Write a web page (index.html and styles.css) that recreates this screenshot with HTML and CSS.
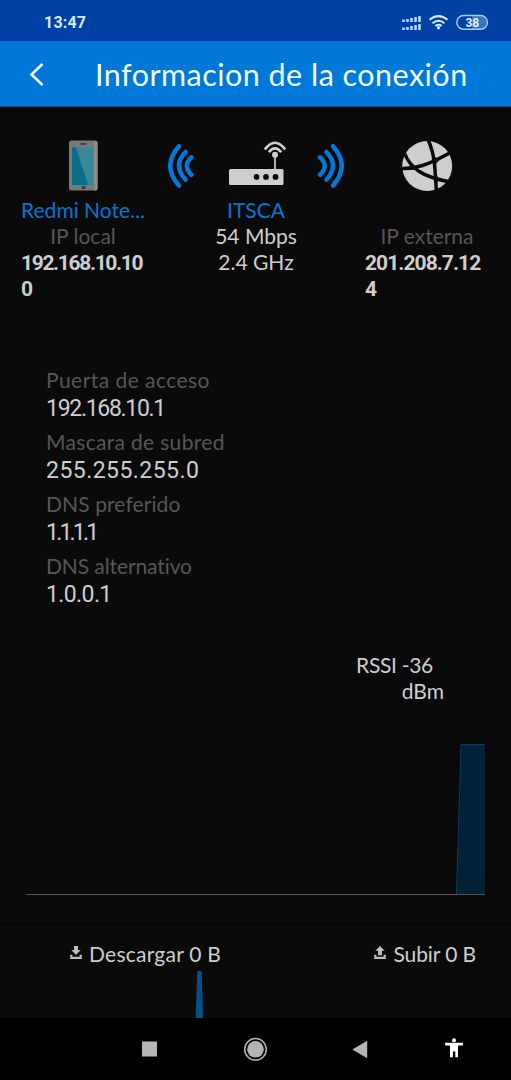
FILE: index.html
```html
<!DOCTYPE html>
<html lang="es">
<head>
<meta charset="utf-8">
<meta name="viewport" content="width=device-width, initial-scale=1">
<title>Informacion de la conexión</title>
<link rel="stylesheet" href="styles.css">
</head>
<body>
<div class="screen">
  <div class="status">
    <span class="clock">13:47</span>
    <svg class="status-icons" width="88" height="18" viewBox="401 14 88 18">
      <g stroke="#bdd9ff" stroke-width="2.600">
        <path d="M403.500 19.500v2.500M407.500 18.900v3.100M411.500 18v4M415.500 17v5M419.500 16v6M403.500 27.500v2.500M407.500 26.900v3.100M411.500 26v4M415.500 25v5M419.500 24v6"/>
      </g>
      <g fill="none" stroke="#d5ebff" stroke-width="2">
        <path d="M429.500 19.700Q438.500 12.500 447.500 19.700M432.500 23.200Q438.500 18.300 444.500 23.200M435.300 26Q438.500 23.600 441.700 26"/>
      </g>
      <circle cx="438.500" cy="27.800" r="1.700" fill="#d5ebff"/>
      <path d="M472 16h8a6.500 6.500 0 0 1 0 13h-8z" fill="#3a72bf"/>
      <rect x="456.800" y="15.600" width="30.600" height="13.600" rx="6.800" fill="none" stroke="#a9cdf8" stroke-width="1.500"/>
      <text x="472.300" y="27" text-anchor="middle" class="battery-text">38</text>
    </svg>
  </div>
  <header class="header">
    <svg class="back" width="18" height="26" viewBox="28 61 18 26"><path d="M42.500 64L31.500 74.500L42.500 85" fill="none" stroke="#effcff" stroke-width="2.600"/></svg>
    <h1 class="title">Informacion de la conexión</h1>
  </header>

  <main class="content">
    <section class="topology">
      <div class="node">
        <svg class="node-icon" width="54" height="56" viewBox="56 138 54 56">
          <rect x="69" y="140.500" width="28.500" height="50" rx="2.500" fill="#777a7b"/>
          <path d="M94 141h1.500a2 2 0 0 1 2 2v46a2 2 0 0 1-2 1.500H94z" fill="#8d8d8d"/>
          <rect x="72" y="147.500" width="22" height="37.500" fill="#39879a"/>
          <path d="M72 147.500h4L88 185H72z" fill="#096f87"/>
          <path d="M80.500 144h6" stroke="#333" stroke-width="1.500"/>
          <rect x="81.500" y="186" width="4" height="3" rx="1" fill="#3d3d3d"/>
        </svg>
        <div class="line link redmi">Redmi Note...</div>
        <div class="line muted local">IP local</div>
        <div class="address local-address">192.168.10.10<br>0</div>
      </div>
      <svg class="waves" width="58" height="56" viewBox="152 138 58 56">
        <g fill="none" stroke="#0079d6" stroke-width="4.500" stroke-linecap="round">
          <path d="M179 146.200Q161.500 165.500 179 185.500M185.500 152Q172.500 165.500 185.500 179.500M191.500 157.300Q182 165.500 191.500 174.800"/>
        </g>
      </svg>
      <div class="node">
        <svg class="node-icon" width="70" height="56" viewBox="221 138 70 56">
          <g fill="none" stroke="#cecece">
            <path d="M264.800 149.500Q275 136 285.200 149.500" stroke-width="2.700"/>
            <path d="M268.800 152.200Q275 144.500 281.200 152.200" stroke-width="2.700"/>
            <path d="M275 155v15" stroke-width="1.700"/>
          </g>
          <circle cx="275" cy="154.700" r="3" fill="#cecece"/>
          <rect x="229" y="169" width="54.500" height="16" rx="1.500" fill="#cecece"/>
          <g fill="#0a0a0a"><circle cx="256.500" cy="176.900" r="2.900"/><circle cx="266" cy="176.900" r="2.900"/><circle cx="275.500" cy="176.900" r="2.900"/></g>
        </svg>
        <div class="line link ssid">ITSCA</div>
        <div class="line mbps">54 Mbps</div>
        <div class="line ghz">2.4 GHz</div>
      </div>
      <svg class="waves" width="58" height="56" viewBox="302 138 58 56">
        <g fill="none" stroke="#0079d6" stroke-width="4.500" stroke-linecap="round">
          <path d="M333 146.200Q350.500 165.500 333 185.500M326.500 152Q339.500 165.500 326.500 179.500M320 157.300Q329.500 165.500 320 174.800"/>
        </g>
      </svg>
      <div class="node">
        <svg class="node-icon" width="56" height="56" viewBox="399.500 138 56 56">
          <circle cx="427.700" cy="166" r="25" fill="#cecece"/>
          <g fill="none" stroke="#0a0a0a" stroke-width="3.500">
            <path d="M428 138Q434 152 435 164T437 193"/>
            <path d="M401 168.500Q412 169 423 165.500T451 152.500"/>
            <path d="M405 153Q409 164 419 171T453 182.500"/>
          </g>
          <path d="M411 163L419 170L409 169.500zM432 159L436 157L440 160L435.500 165zM433 177L437 175L441 181L435 182z" fill="#0a0a0a"/>
        </svg>
        <div class="line"></div>
        <div class="line muted external">IP externa</div>
        <div class="address external-address">201.208.7.12<br>4</div>
      </div>
    </section>

    <dl class="details">
      <dt class="d1">Puerta de acceso</dt><dd class="v1">192.168.10.1</dd>
      <dt class="d2">Mascara de subred</dt><dd class="v2">255.255.255.0</dd>
      <dt class="d3">DNS preferido</dt><dd class="v3">1.1.1.1</dd>
      <dt class="d4">DNS alternativo</dt><dd class="v4">1.0.0.1</dd>
    </dl>

    <section class="signal">
      <div class="rssi"><span class="rssi-a">RSSI -36</span><span class="rssi-b">dBm</span></div>
      <svg class="chart" width="511" height="156" viewBox="0 741 511 156">
        <path d="M456.500 894L461 744.500H485V894z" fill="#002136"/>
        <path d="M456.500 894L461 744.500H485" fill="none" stroke="#073d5e"/>
        <path d="M26 894.500H485" stroke="#555"/>
      </svg>
    </section>

    <section class="traffic">
      <div class="traffic-labels">
        <div class="rate">
          <svg width="12" height="14" viewBox="0 0 12 14"><path d="M4 0h4v4h2.700L6 9 1.300 4H4zM.2 8.700h2.200v2h7.200v-2h2.200V13H.2z" fill="#bdbdbd"/></svg>
          <span class="down">Descargar 0 B</span>
        </div>
        <div class="rate">
          <svg width="12" height="14" viewBox="0 0 12 14"><path d="M6 0l4.700 4.700H8V9.300H4V4.700H1.300zM.2 8.700h2.200v2h7.200v-2h2.200V13H.2z" fill="#bdbdbd"/></svg>
          <span class="up">Subir 0 B</span>
        </div>
      </div>
      <svg class="spike" width="511" height="50" viewBox="0 968 511 50"><path d="M195.500 1018L197.300 972Q199.500 969 201.700 972L203 1018z" fill="#00528c"/></svg>
    </section>
  </main>

  <nav class="navbar">
    <svg width="511" height="62" viewBox="0 1018 511 62">
      <rect x="142" y="1041.500" width="15" height="15" fill="#b5b5b5"/>
      <circle cx="255.500" cy="1049.300" r="10.800" fill="none" stroke="#b5b5b5" stroke-width="1.500"/>
      <circle cx="255.500" cy="1049.300" r="8.300" fill="#b5b5b5"/>
      <path d="M352.300 1049.500L367.200 1040.800V1058.200z" fill="#b5b5b5"/>
      <circle cx="454" cy="1040.200" r="2" fill="#fff"/>
      <path d="M445.200 1042.700H462.900V1045.400H458V1057.300H455.300V1051.500H452.900V1057.300H450V1045.400H445.200z" fill="#fff"/>
    </svg>
  </nav>
</div>
</body>
</html>
```
FILE: styles.css
```css
* { box-sizing: border-box; }
body { margin: 0; background: #000; font-family: Lato, "Open Sans", sans-serif; font-variant-ligatures: none; }
svg { display: block; flex: none; }
.screen { width: 511px; height: 1080px; overflow: hidden; display: flex; flex-direction: column; background: #0a0a0a; color: #cecece; }
.status { height: 41px; flex: none; background: #0042a4; display: flex; justify-content: space-between; padding: 14px 22px 0 44px; }
.clock { font: bold 16px/18px Roboto, sans-serif; color: #d9ebff; letter-spacing: .2px; }
.battery-text { font: bold 12px Roboto, sans-serif; fill: #e4f2ff; }
.header { height: 66px; flex: none; background: #0078d7; border-bottom: 1px solid #004d8c; display: flex; align-items: center; padding: 1px 0 0 28px; }
.title { margin: 0 0 0 49px; font-size: 30.5px; line-height: 40px; font-weight: 400; color: #effcff; white-space: nowrap; letter-spacing: .47px; }
.content { height: 911px; flex: none; display: flex; flex-direction: column; }
.topology { height: 259px; padding: 31px 17px 0 14px; display: grid; grid-template-columns: 138px 58px 92px 58px 134px; }
.node { display: flex; flex-direction: column; align-items: center; }
.node-icon { margin-bottom: 3px; }
.line { height: 26px; font-size: 21px; line-height: 26px; white-space: nowrap; }
.link { color: #0079d6; }
.muted { color: #565656; }
.address { width: 124px; font: bold 21px/26px Roboto, sans-serif; white-space: nowrap; padding-top: 1px; }
.local-address { letter-spacing: -1.35px; }
.external-address { letter-spacing: -.95px; }
.details { margin: 0; height: 269px; padding-left: 46px; font-size: 21px; }
.details dt { height: 27px; line-height: 27px; color: #565656; }
.details dd { margin: 0; height: 35px; font: 23px/32px Roboto, sans-serif; }
.d1 { letter-spacing: .45px; }
.d2 { letter-spacing: .32px; }
.d3 { letter-spacing: .1px; }
.d4 { letter-spacing: -.1px; }
.v1 { letter-spacing: -1.3px; }
.v2 { letter-spacing: .45px; }
.v3 { letter-spacing: -2.8px; }
.v4 { letter-spacing: -.6px; }
.signal { height: 288px; border-top: 1px solid #080808; padding-top: 16px; }
.rssi { width: 140px; margin-left: 304px; height: 89px; display: flex; flex-direction: column; align-items: flex-end; font-size: 21px; line-height: 26px; }
.rssi-a { margin-right: 11px; letter-spacing: -.3px; }
.traffic { height: 95px; border-top: 3px solid #070707; }
.traffic-labels { height: 42px; padding: 11px 35px 0 70px; display: flex; justify-content: space-between; }
.rate { display: flex; align-items: center; gap: 7px; height: 32px; font-size: 21px; }
.down { letter-spacing: .24px; }
.up { letter-spacing: -.1px; }
.navbar { height: 62px; flex: none; background: #000; }
```
